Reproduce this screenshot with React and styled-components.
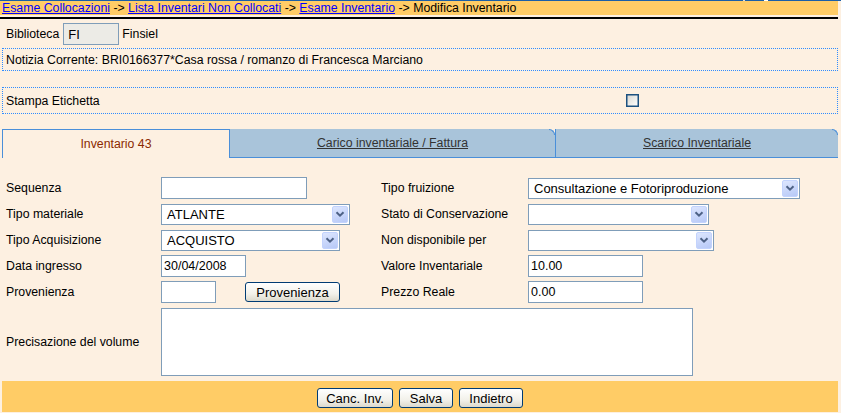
import styled, { createGlobalStyle } from "styled-components";

const GlobalStyle = createGlobalStyle`
  body {
    margin: 0;
    background: #fdf0e1;
    color: #000;
    font-family: "Liberation Sans", Arial, sans-serif;
    font-size: 12.3px;
  }
`;

const Page = styled.div`
  width: 841px;
  min-height: 413px;
`;

const TopLine = styled.div`
  height: 1px;
  background: linear-gradient(
    to right,
    #1a5fa8 0 743px,
    #d8d8d8 743px 745px,
    #1a5fa8 745px 764px,
    #ffffff 764px 768px,
    #1a5fa8 768px
  );
`;

const Crumbs = styled.div`
  width: 836px;
  height: 14px;
  padding-left: 2px;
  line-height: 14px;
  background: #ffcc66;
  white-space: nowrap;

  & a {
    color: #0000ff;
    text-decoration: underline;
  }
`;

const Rule = styled.div`
  width: 838px;
  height: 2px;
  margin-top: 2px;
  background: #000;
`;

const Content = styled.div`
  width: 836px;
  padding-left: 2px;
`;

const LibraryRow = styled.div`
  display: flex;
  align-items: center;
  height: 22px;
  margin-top: 4px;
  padding-left: 4px;
`;

const CodeInput = styled.input`
  box-sizing: border-box;
  width: 56px;
  height: 22px;
  margin: 0 3px 0 4px;
  padding: 0 4px;
  border: 1px solid #7f9db9;
  background: #ecebe6;
  font-family: "Liberation Sans", Arial, sans-serif;
  font-size: 13px;
`;

const DottedBox = styled.div`
  box-sizing: border-box;
  display: grid;
  grid-template-columns: ${(p) => p.$cols || "1fr"};
  align-items: center;
  height: ${(p) => p.$height}px;
  margin-top: ${(p) => p.$top}px;
  padding-left: 3px;
  border: 1px dotted #2f8cff;
`;

const Check = styled.span`
  box-sizing: border-box;
  display: block;
  width: 13px;
  height: 13px;
  border: 1px solid #1c5180;
  box-shadow: inset 0 0 0 0.5px #1c5180;
  background: linear-gradient(135deg, #d8d8d2, #ffffff);
`;

const Tabs = styled.div`
  display: flex;
  height: 29px;
  margin-top: 15px;
`;

const Tab = styled.div`
  position: relative;
  box-sizing: border-box;
  display: flex;
  align-items: center;
  justify-content: center;
  width: ${(p) => p.$width}px;
  border-left: 1px solid #4a8fd9;
  border-top: ${(p) => (p.$active ? "1px solid #4a8fd9" : "0")};
  border-bottom: ${(p) => (p.$active ? "0" : "1px solid #4a8fd9")};
  border-top-right-radius: ${(p) => (p.$active ? "0" : "6px")};
  background: ${(p) => (p.$active ? "transparent" : "#a9c4da")};
  color: ${(p) => (p.$active ? "#8b2a00" : "#333")};
  font-size: 12.3px;
  text-decoration: ${(p) => (p.$active ? "none" : "underline")};

  &::after {
    content: "";
    display: ${(p) => (p.$active ? "none" : "block")};
    position: absolute;
    top: 0;
    right: 0;
    width: 6px;
    height: 6px;
    border-top: 1px solid #4a8fd9;
    border-right: 1px solid #4a8fd9;
    border-top-right-radius: 6px;
    box-sizing: border-box;
  }
`;

const FormGrid = styled.div`
  display: grid;
  grid-template-columns: 155px 220px 147px 1fr;
  grid-template-rows: repeat(5, 26px) auto;
  align-items: center;
  margin-top: 17px;
  padding-left: 4px;
`;

const Cell = styled.div`
  display: flex;
  align-items: center;
  gap: ${(p) => p.$gap || 0}px;
`;

const TextInput = styled.input`
  box-sizing: border-box;
  width: ${(p) => p.$width}px;
  height: 22px;
  padding: 0 2px;
  border: 1px solid #7f9db9;
  background: #fff;
  font-family: "Liberation Sans", Arial, sans-serif;
  font-size: 12.5px;
`;

const SelectWrap = styled.div`
  box-sizing: border-box;
  display: flex;
  align-items: center;
  width: ${(p) => p.$width}px;
  height: 21px;
  padding: 1px;
  border: 1px solid #7f9db9;
  background: #fff;
`;

const SelectValue = styled.span`
  flex: 1;
  padding-left: 4px;
  font-size: 13px;
  white-space: nowrap;
`;

const Arrow = styled.span`
  box-sizing: border-box;
  display: flex;
  align-items: center;
  justify-content: center;
  width: 16px;
  height: 17px;
  border: 1px solid #c3d3fd;
  border-radius: 2px;
  background: linear-gradient(160deg, #dde6fe, #b7c9f7);
`;

const Button = styled.button`
  box-sizing: border-box;
  width: ${(p) => p.$width}px;
  height: 20px;
  padding: 0;
  border: 1px solid #003c74;
  border-radius: 3px;
  background: linear-gradient(#ffffff, #f2f1ea 60%, #dcd9cc);
  color: #000;
  font-family: "Liberation Sans", Arial, sans-serif;
  font-size: 13px;
`;

const TextArea = styled.textarea`
  grid-column: 2 / span 3;
  box-sizing: border-box;
  width: 532px;
  height: 68px;
  margin: 3px 0 2px;
  border: 1px solid #7f9db9;
  background: #fff;
  resize: none;
`;

const Footer = styled.div`
  box-sizing: border-box;
  display: flex;
  justify-content: center;
  gap: 6px;
  height: 31px;
  margin-top: 3px;
  padding-top: 7px;
  background: #ffcc66;
`;

function Select({ width, value }) {
  return (
    <SelectWrap $width={width}>
      <SelectValue>{value}</SelectValue>
      <Arrow>
        <svg width="10" height="6" viewBox="0 0 10 6">
          <path d="M1.5 1.2 L5 4.6 L8.5 1.2" fill="none" stroke="#4d6185" strokeWidth="2" />
        </svg>
      </Arrow>
    </SelectWrap>
  );
}

export default function App() {
  return (
    <Page>
      <GlobalStyle />
      <TopLine />
      <Crumbs>
        <a>Esame Collocazioni</a> -&gt; <a>Lista Inventari Non Collocati</a> -&gt;{" "}
        <a>Esame Inventario</a> -&gt; Modifica Inventario
      </Crumbs>
      <Rule />
      <Content>
        <LibraryRow>
          Biblioteca
          <CodeInput defaultValue="FI" />
          Finsiel
        </LibraryRow>
        <DottedBox $height={23} $top={3}>
          Notizia Corrente: BRI0166377*Casa rossa / romanzo di Francesca Marciano
        </DottedBox>
        <DottedBox $height={27} $top={16} $cols="620px auto">
          <span>Stampa Etichetta</span>
          <Check />
        </DottedBox>
        <Tabs>
          <Tab $active $width={227}>Inventario 43</Tab>
          <Tab $width={326}>Carico inventariale / Fattura</Tab>
          <Tab $width={283}>Scarico Inventariale</Tab>
        </Tabs>
        <FormGrid>
          <span>Sequenza</span>
          <Cell><TextInput $width={146} /></Cell>
          <span>Tipo fruizione</span>
          <Cell><Select width={272} value="Consultazione e Fotoriproduzione" /></Cell>

          <span>Tipo materiale</span>
          <Cell><Select width={189} value="ATLANTE" /></Cell>
          <span>Stato di Conservazione</span>
          <Cell><Select width={181} value="" /></Cell>

          <span>Tipo Acquisizione</span>
          <Cell><Select width={179} value="ACQUISTO" /></Cell>
          <span>Non disponibile per</span>
          <Cell><Select width={186} value="" /></Cell>

          <span>Data ingresso</span>
          <Cell><TextInput $width={85} defaultValue="30/04/2008" /></Cell>
          <span>Valore Inventariale</span>
          <Cell><TextInput $width={115} defaultValue="10.00" /></Cell>

          <span>Provenienza</span>
          <Cell $gap={29}>
            <TextInput $width={55} />
            <Button $width={95}>Provenienza</Button>
          </Cell>
          <span>Prezzo Reale</span>
          <Cell><TextInput $width={115} defaultValue="0.00" /></Cell>

          <span>Precisazione del volume</span>
          <TextArea />
        </FormGrid>
        <Footer>
          <Button $width={76}>Canc. Inv.</Button>
          <Button $width={54}>Salva</Button>
          <Button $width={64}>Indietro</Button>
        </Footer>
      </Content>
    </Page>
  );
}
